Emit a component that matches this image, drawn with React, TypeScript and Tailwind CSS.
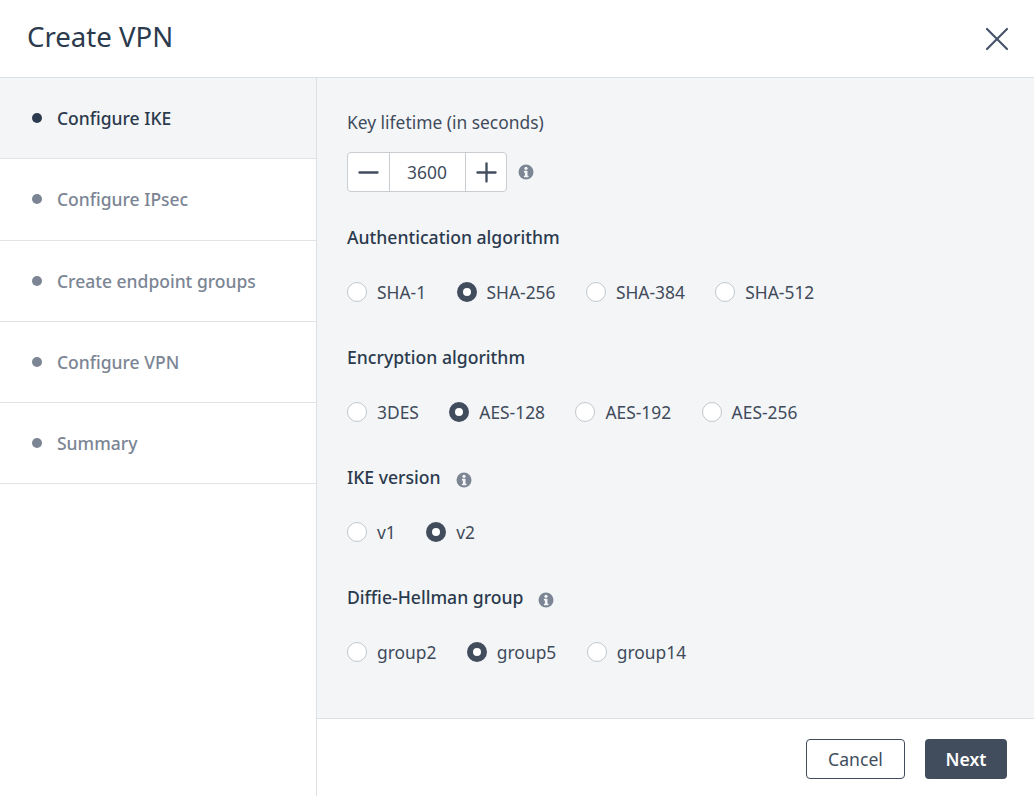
import { X, Minus, Plus } from "lucide-react";

const font = "font-['Noto_Sans','Open_Sans',sans-serif]";

const steps = [
  "Configure IKE",
  "Configure IPsec",
  "Create endpoint groups",
  "Configure VPN",
  "Summary",
];

function InfoIcon({ className = "" }: { className?: string }) {
  return (
    <svg width="16" height="16" viewBox="0 0 16 16" className={`shrink-0 ${className}`}>
      <circle cx="8" cy="8" r="7.5" fill="#7b8594" />
      <circle cx="8" cy="4.3" r="1.6" fill="#f4f5f7" />
      <path d="M5.9 6.8h3.6v4.9h1v1.6H5.9v-1.6h1V8.4h-1z" fill="#f4f5f7" />
    </svg>
  );
}

function Radio({ label, checked }: { label: string; checked?: boolean }) {
  return (
    <div className="flex items-center gap-[10px]">
      {checked ? (
        <span className="w-5 h-5 rounded-full bg-white border-[6px] border-[#414d5d]" />
      ) : (
        <span className="w-5 h-5 rounded-full bg-white border border-[#c3c7cd]" />
      )}
      <span className="text-[17.4px] leading-6 text-[#3f4b5b]">{label}</span>
    </div>
  );
}

function RadioGroup({
  title,
  options,
  selected,
  info,
}: {
  title: string;
  options: string[];
  selected: string;
  info?: boolean;
}) {
  return (
    <div className="h-[120px]">
      <div className="flex items-center gap-[15px] h-6">
        <span className="text-[17.6px] leading-6 font-medium text-[#2b3a4d]">{title}</span>
        {info && <InfoIcon className="mt-[5px]" />}
      </div>
      <div className="flex items-center mt-[31px] gap-[30.4px]">
        {options.map((o) => (
          <Radio key={o} label={o} checked={o === selected} />
        ))}
      </div>
    </div>
  );
}

export default function App() {
  return (
    <div className={`${font} w-[1034px] h-[796px] bg-white flex flex-col overflow-hidden`}>
      <header className="h-[78px] shrink-0 border-b border-[#dcdfe3] flex items-center justify-between pl-[27px] pr-[17px]">
        <h1 className="text-[27.6px] leading-none font-normal text-[#2b3a4d] -mt-[4px]">Create VPN</h1>
        <X size={40} strokeWidth={1.3} className="text-[#47546a]" />
      </header>

      <div className="flex flex-1 min-h-0">
        <aside className="w-[317px] shrink-0 border-r border-[#dcdfe3]">
          {steps.map((s, i) => (
            <div
              key={s}
              className={`h-[81.25px] border-b border-[#e1e3e7] flex items-center gap-[15px] pl-[32px] ${
                i === 0 ? "bg-[#f4f5f7]" : "bg-white"
              }`}
            >
              <span
                className={`w-[10px] h-[10px] rounded-full ${
                  i === 0 ? "bg-[#2b3a4d]" : "bg-[#7b8594]"
                }`}
              />
              <span
                className={`text-[17.5px] leading-6 font-medium ${
                  i === 0 ? "text-[#2b3a4d]" : "text-[#7b8594]"
                }`}
              >
                {s}
              </span>
            </div>
          ))}
        </aside>

        <div className="flex-1 flex flex-col min-w-0">
          <main className="flex-1 bg-[#f4f5f7] pl-[30px] pt-[32px]">
            <div className="text-[17.4px] leading-6 text-[#3f4b5b]">Key lifetime (in seconds)</div>
            <div className="flex items-center gap-[11px] mt-[18px]">
              <div className="flex items-stretch h-10 w-[160px] bg-white border border-[#c9ccd1] rounded-[4px]">
                <div className="w-[41px] flex items-center justify-center">
                  <Minus size={31} strokeWidth={1.8} className="text-[#414d5d]" />
                </div>
                <div className="flex-1 flex items-center justify-center border-x border-[#c9ccd1] pr-[1px] text-[17.4px] text-[#3f4b5b]">
                  3600
                </div>
                <div className="w-[40px] flex items-center justify-center">
                  <Plus size={31} strokeWidth={1.8} className="text-[#414d5d]" />
                </div>
              </div>
              <InfoIcon />
            </div>

            <div className="mt-[33px] flex flex-col">
              <RadioGroup
                title="Authentication algorithm"
                options={["SHA-1", "SHA-256", "SHA-384", "SHA-512"]}
                selected="SHA-256"
              />
              <RadioGroup
                title="Encryption algorithm"
                options={["3DES", "AES-128", "AES-192", "AES-256"]}
                selected="AES-128"
              />
              <RadioGroup title="IKE version" options={["v1", "v2"]} selected="v2" info />
              <RadioGroup
                title="Diffie-Hellman group"
                options={["group2", "group5", "group14"]}
                selected="group5"
                info
              />
            </div>
          </main>

          <footer className="h-[78px] shrink-0 bg-white border-t border-[#dcdfe3] flex items-center justify-end gap-[20px] pr-[27px] pt-[2px]">
            <button className="w-[99px] h-10 pt-[1px] bg-white border border-[#414d5d] rounded-[4px] text-[17.6px] text-[#414d5d]">
              Cancel
            </button>
            <button className="w-[82px] h-10 pt-[1px] bg-[#414d5d] rounded-[4px] text-[17.6px] font-semibold text-white">
              Next
            </button>
          </footer>
        </div>
      </div>
    </div>
  );
}
